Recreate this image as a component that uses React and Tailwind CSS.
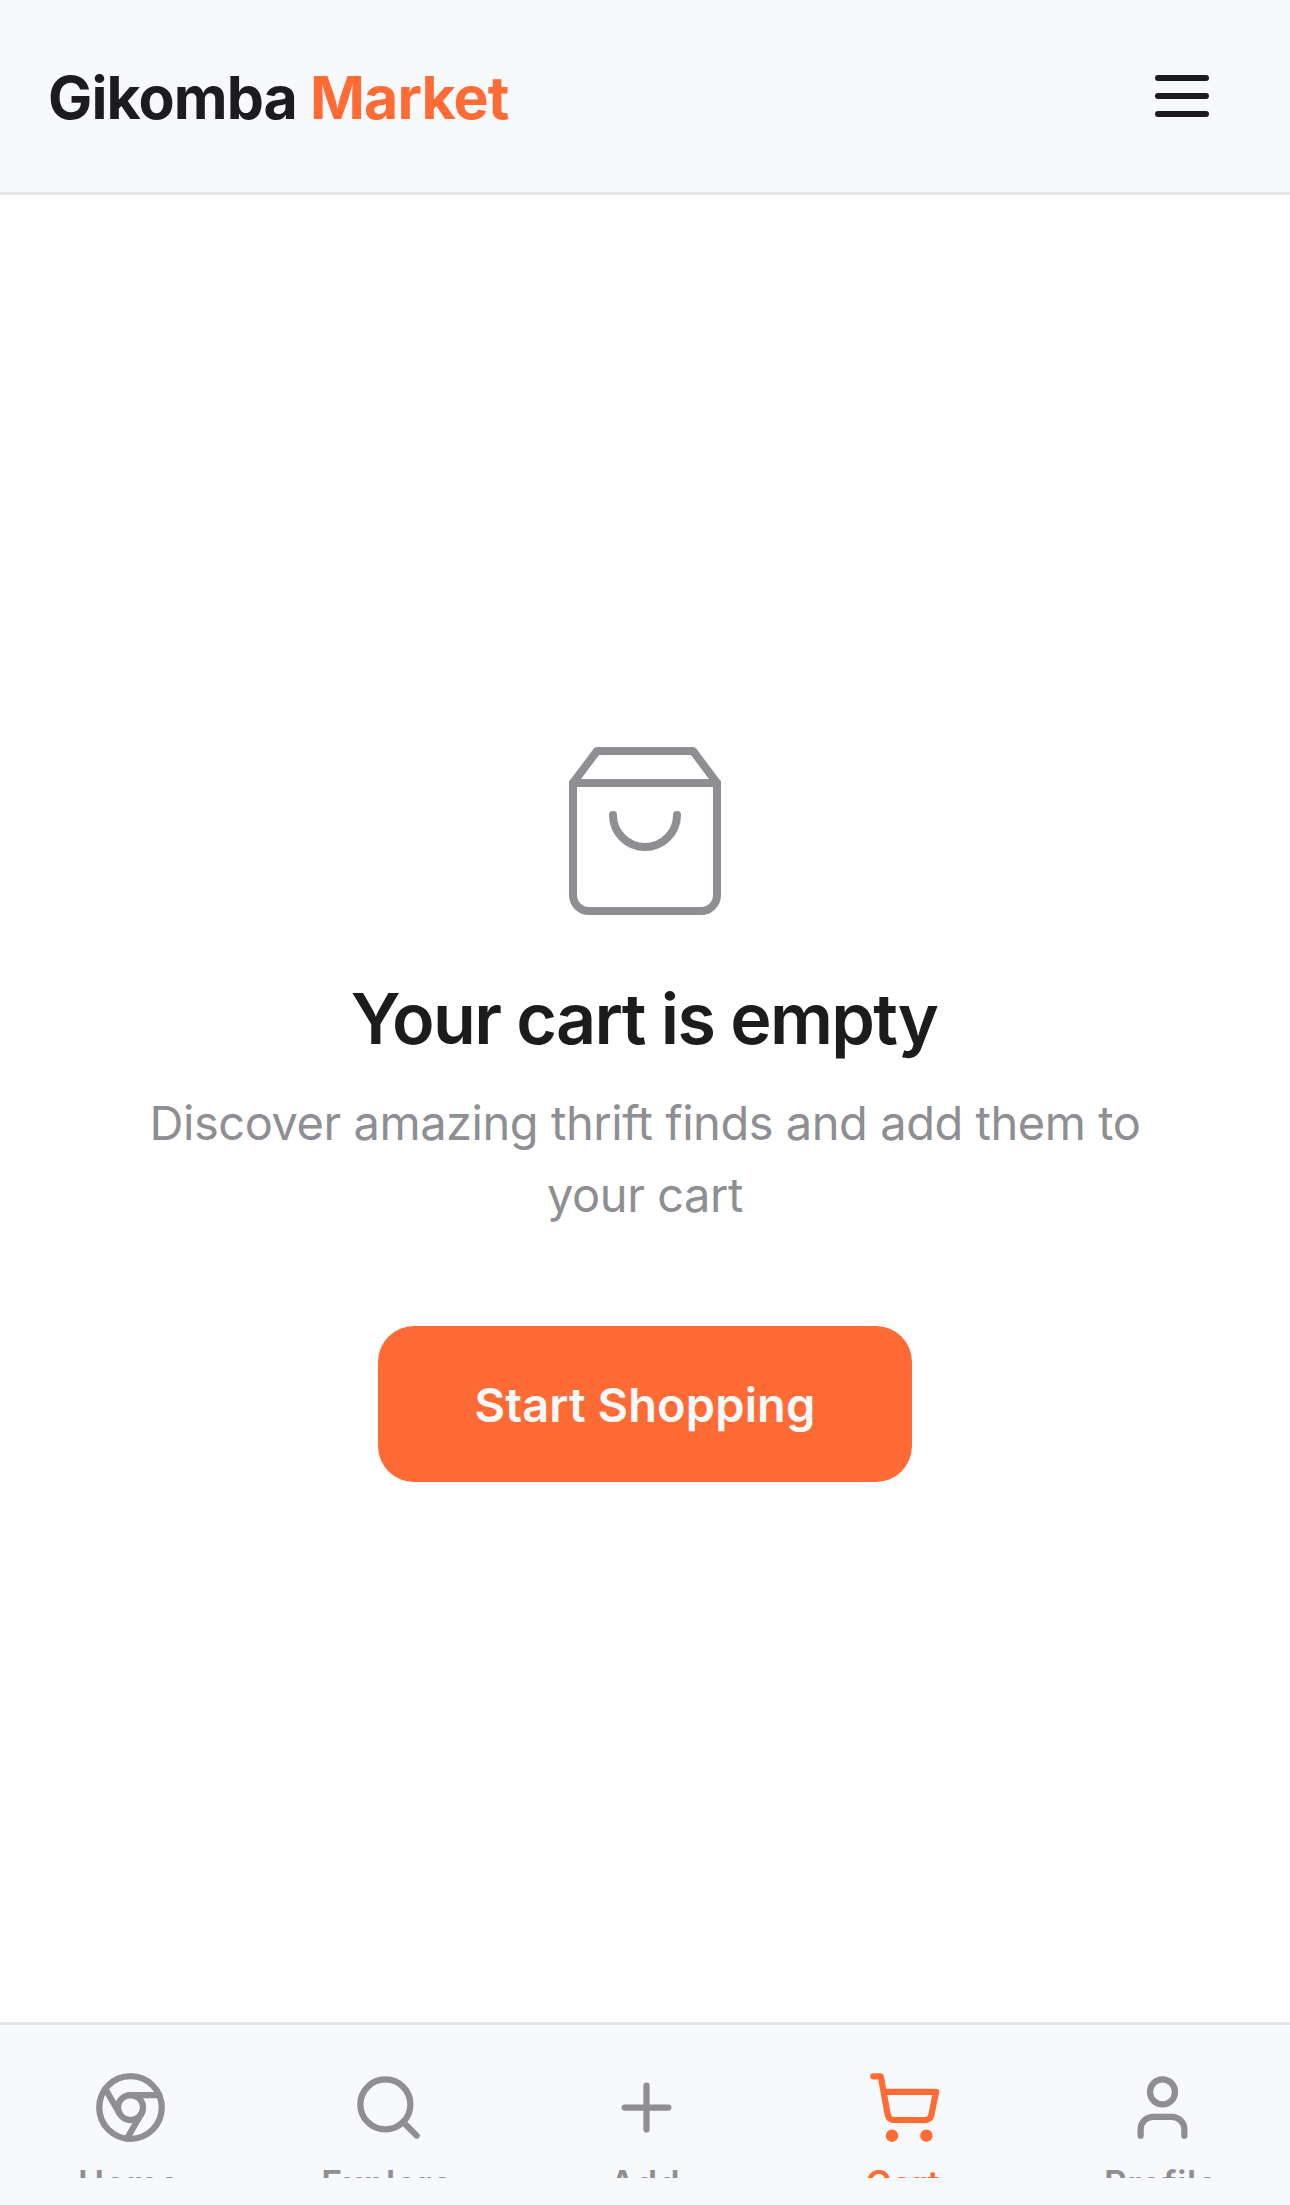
const NAV_ITEMS = [
  { id: "home", label: "Home" },
  { id: "explore", label: "Explore" },
  { id: "add", label: "Add" },
  { id: "cart", label: "Cart" },
  { id: "profile", label: "Profile" },
];

function Icon({ className, strokeWidth = 2, children }) {
  return (
    <svg
      className={className}
      viewBox="0 0 24 24"
      fill="none"
      stroke="currentColor"
      strokeWidth={strokeWidth}
      strokeLinecap="round"
      strokeLinejoin="round"
    >
      {children}
    </svg>
  );
}

function NavGlyph({ id }) {
  switch (id) {
    case "home":
      return (
        <>
          <circle cx="12" cy="12" r="10" />
          <circle cx="12" cy="12" r="4" />
          <path d="M21.17 8H12M3.95 6.06L8.54 14M10.88 21.94L15.46 14" />
        </>
      );
    case "explore":
      return (
        <>
          <circle cx="11" cy="11" r="8" />
          <path d="M21 21l-4.35-4.35" />
        </>
      );
    case "add":
      return <path d="M12 5v14M5 12h14" />;
    case "cart":
      return (
        <>
          <circle cx="8" cy="21" r="1" />
          <circle cx="19" cy="21" r="1" />
          <path d="M2 2h2.4l2.25 12.35A2 2 0 0 0 8.6 16h10a2 2 0 0 0 2-1.65L22.1 7H5.3" />
        </>
      );
    default:
      return (
        <>
          <circle cx="12" cy="7" r="4" />
          <path d="M19 21v-2a4 4 0 0 0-4-4H9a4 4 0 0 0-4 4v2" />
        </>
      );
  }
}

function Header() {
  return (
    <header className="flex h-[195px] shrink-0 items-start justify-between border-b-[3px] border-[#e5e5ea] bg-[#f8f9fb] pt-[60px] pr-[72px] pl-[48px]">
      <h1 className="text-[59px] leading-[76px] font-bold tracking-[-0.9px] whitespace-nowrap text-[#1c1c1e]">
        Gikomba <span className="text-[#ff6b35]">Market</span>
      </h1>
      <button type="button" aria-label="Menu" className="text-[#1c1c1e]">
        <Icon className="size-[72px]">
          <path d="M4 6h16M4 12h16M4 18h16" />
        </Icon>
      </button>
    </header>
  );
}

function EmptyCart() {
  return (
    <main className="flex flex-1 flex-col items-center pt-[540px] text-center">
      <Icon className="size-[192px] text-[#8e8e93]" strokeWidth={1}>
        <path d="M6 2L3 6v14a2 2 0 0 0 2 2h14a2 2 0 0 0 2-2V6l-3-4z" />
        <path d="M3 6h18" />
        <path d="M16 10a4 4 0 0 1-8 0" />
      </Icon>
      <h2 className="mt-12 pr-0.5 text-[70px] leading-[88px] font-semibold tracking-[-1.68px] whitespace-nowrap text-[#1c1c1e]">
        Your cart is empty
      </h2>
      <p className="mt-6 text-[47px] leading-[72px] tracking-[-0.45px] whitespace-nowrap text-[#8e8e93]">
        Discover amazing thrift finds and add them to
        <br />
        your cart
      </p>
      <button
        type="button"
        className="mt-[95px] h-[156px] w-[534px] shrink-0 rounded-[36px] bg-[#ff6b35] pt-0.5 text-[47px] font-semibold tracking-[0.1px] whitespace-nowrap text-[#f8f9fb]"
      >
        Start Shopping
      </button>
    </main>
  );
}

function BottomNav() {
  return (
    <nav className="flex h-[183px] shrink-0 flex-col justify-between border-t-[3px] border-[#e5e5ea] bg-[#f8f9fb]">
      {/* labels are cut off where the toolbar area starts */}
      <div className="grid h-[153px] grid-cols-5 overflow-hidden pt-[45px]">
        {NAV_ITEMS.map((item) => (
          <button
            key={item.id}
            type="button"
            className={
              item.id === "cart"
                ? "flex flex-col items-center text-[#ff6b35]"
                : "flex flex-col items-center text-[#8e8e93]"
            }
          >
            <Icon className="ml-[3px] size-[75px] shrink-0">
              <NavGlyph id={item.id} />
            </Icon>
            <span className="mt-[18px] text-[35px] leading-[40px] font-semibold tracking-[0.6px]">
              {item.label}
            </span>
          </button>
        ))}
      </div>
      <div className="h-3 bg-linear-to-b from-[#f8f9fb] to-[#f6f7f8]" />
    </nav>
  );
}

export default function App() {
  return (
    <div className="flex h-[2205px] w-[1290px] flex-col overflow-hidden bg-white font-['Inter',sans-serif]">
      <Header />
      <EmptyCart />
      <BottomNav />
    </div>
  );
}
